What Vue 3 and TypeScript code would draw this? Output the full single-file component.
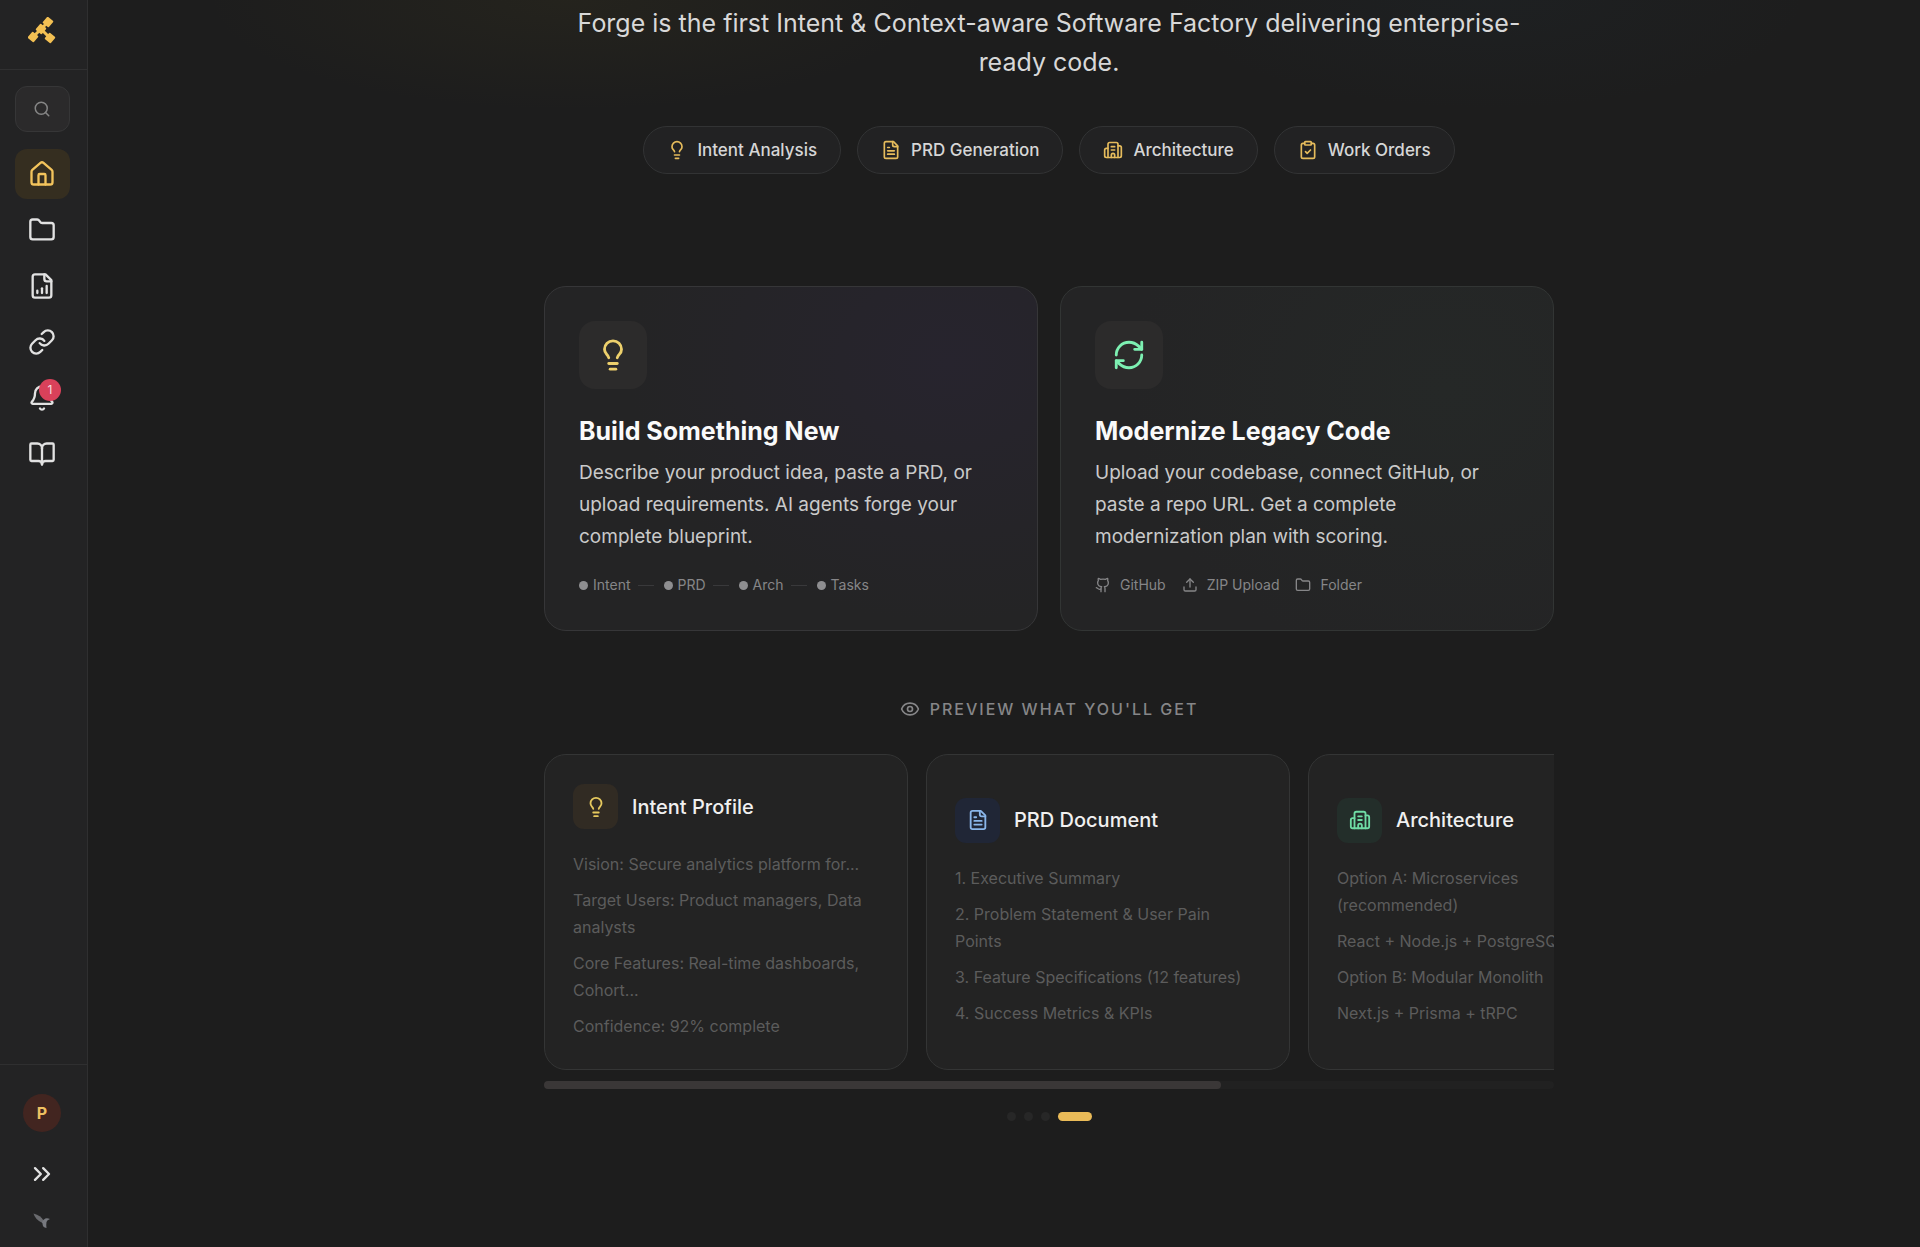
<script setup lang="ts">
interface Tile { icon: string; label: string }
interface Preview { icon: string; tone: string; title: string; lines: string[] }

const icons: Record<string, string[]> = {
  search: ['M21 21l-4.3-4.3', 'M11 3a8 8 0 1 0 0 16a8 8 0 1 0 0-16z'],
  home: [
    'M15 21v-8a1 1 0 0 0-1-1h-4a1 1 0 0 0-1 1v8',
    'M3 10a2 2 0 0 1 .709-1.528l7-6a2 2 0 0 1 2.582 0l7 6A2 2 0 0 1 21 10v9a2 2 0 0 1-2 2H5a2 2 0 0 1-2-2z',
  ],
  folder: ['M20 20a2 2 0 0 0 2-2V8a2 2 0 0 0-2-2h-7.9a2 2 0 0 1-1.69-.9L9.6 3.9A2 2 0 0 0 7.93 3H4a2 2 0 0 0-2 2v13a2 2 0 0 0 2 2Z'],
  chart: ['M15 2H6a2 2 0 0 0-2 2v16a2 2 0 0 0 2 2h12a2 2 0 0 0 2-2V7Z', 'M14 2v4a2 2 0 0 0 2 2h4', 'M8 18v-2', 'M12 18v-4', 'M16 18v-6'],
  link: [
    'M10 13a5 5 0 0 0 7.54.54l3-3a5 5 0 0 0-7.07-7.07l-1.72 1.71',
    'M14 11a5 5 0 0 0-7.54-.54l-3 3a5 5 0 0 0 7.07 7.07l1.71-1.71',
  ],
  bell: [
    'M10.268 21a2 2 0 0 0 3.464 0',
    'M3.262 15.326A1 1 0 0 0 4 17h16a1 1 0 0 0 .74-1.673C19.41 13.956 18 12.499 18 8A6 6 0 0 0 6 8c0 4.499-1.411 5.956-2.738 7.326',
  ],
  book: [
    'M12 7v14',
    'M3 18a1 1 0 0 1-1-1V4a1 1 0 0 1 1-1h5a4 4 0 0 1 4 4 4 4 0 0 1 4-4h5a1 1 0 0 1 1 1v13a1 1 0 0 1-1 1h-6a3 3 0 0 0-3 3 3 3 0 0 0-3-3z',
  ],
  expand: ['M6 17l5-5-5-5', 'M13 17l5-5-5-5'],
  bulb: [
    'M15 14c.2-1 .7-1.7 1.5-2.5 1-.9 1.5-2.2 1.5-3.5A6 6 0 0 0 6 8c0 1 .2 2.2 1.5 3.5.7.7 1.3 1.5 1.5 2.5',
    'M9 18h6',
    'M10 22h4',
  ],
  doc: ['M15 2H6a2 2 0 0 0-2 2v16a2 2 0 0 0 2 2h12a2 2 0 0 0 2-2V7Z', 'M14 2v4a2 2 0 0 0 2 2h4', 'M10 9H8', 'M16 13H8', 'M16 17H8'],
  building: [
    'M10 12h4', 'M10 8h4', 'M14 21v-3a2 2 0 0 0-4 0v3',
    'M6 10H4a2 2 0 0 0-2 2v7a2 2 0 0 0 2 2h16a2 2 0 0 0 2-2V9a2 2 0 0 0-2-2h-2',
    'M6 21V5a2 2 0 0 1 2-2h8a2 2 0 0 1 2 2v16',
  ],
  clipboard: [
    'M9 2h6a1 1 0 0 1 1 1v2a1 1 0 0 1-1 1H9a1 1 0 0 1-1-1V3a1 1 0 0 1 1-1z',
    'M16 4h2a2 2 0 0 1 2 2v14a2 2 0 0 1-2 2H6a2 2 0 0 1-2-2V6a2 2 0 0 1 2-2h2',
    'M9 14l2 2 4-4',
  ],
  refresh: [
    'M3 12a9 9 0 0 1 9-9 9.75 9.75 0 0 1 6.74 2.74L21 8', 'M21 3v5h-5',
    'M21 12a9 9 0 0 1-9 9 9.75 9.75 0 0 1-6.74-2.74L3 16', 'M8 16H3v5',
  ],
  github: [
    'M15 22v-4a4.8 4.8 0 0 0-1-3.5c3 0 6-2 6-5.5.08-1.25-.27-2.48-1-3.5.28-1.15.28-2.35 0-3.5 0 0-1 0-3 1.5-2.64-.5-5.36-.5-8 0C6 2 5 2 5 2c-.3 1.15-.3 2.35 0 3.5A5.403 5.403 0 0 0 4 9c0 3.5 3 5.5 6 5.5-.39.49-.68 1.05-.85 1.65-.17.6-.22 1.23-.15 1.85v4',
    'M9 18c-4.51 2-5-2-7-2',
  ],
  upload: ['M12 3v12', 'M17 8l-5-5-5 5', 'M21 15v4a2 2 0 0 1-2 2H5a2 2 0 0 1-2-2v-4'],
  eye: [
    'M2.062 12.348a1 1 0 0 1 0-.696 10.75 10.75 0 0 1 19.876 0 1 1 0 0 1 0 .696 10.75 10.75 0 0 1-19.876 0',
    'M12 9a3 3 0 1 0 0 6a3 3 0 1 0 0-6z',
  ],
}

const nav: Tile[] = [
  { icon: 'home', label: 'Home' },
  { icon: 'folder', label: 'Projects' },
  { icon: 'chart', label: 'Reports' },
  { icon: 'link', label: 'Integrations' },
  { icon: 'bell', label: 'Notifications' },
  { icon: 'book', label: 'Docs' },
]

const pills: Tile[] = [
  { icon: 'bulb', label: 'Intent Analysis' },
  { icon: 'doc', label: 'PRD Generation' },
  { icon: 'building', label: 'Architecture' },
  { icon: 'clipboard', label: 'Work Orders' },
]

const steps: string[] = ['Intent', 'PRD', 'Arch', 'Tasks']

const sources: Tile[] = [
  { icon: 'github', label: 'GitHub' },
  { icon: 'upload', label: 'ZIP Upload' },
  { icon: 'folder', label: 'Folder' },
]

const previews: Preview[] = [
  {
    icon: 'bulb', tone: 'amber', title: 'Intent Profile',
    lines: [
      'Vision: Secure analytics platform for...',
      'Target Users: Product managers, Data analysts',
      'Core Features: Real-time dashboards, Cohort...',
      'Confidence: 92% complete',
    ],
  },
  {
    icon: 'doc', tone: 'blue', title: 'PRD Document',
    lines: [
      '1. Executive Summary',
      '2. Problem Statement & User Pain Points',
      '3. Feature Specifications (12 features)',
      '4. Success Metrics & KPIs',
    ],
  },
  {
    icon: 'building', tone: 'green', title: 'Architecture',
    lines: [
      'Option A: Microservices (recommended)',
      'React + Node.js + PostgreSQL',
      'Option B: Modular Monolith',
      'Next.js + Prisma + tRPC',
    ],
  },
]
</script>

<template>
  <div class="shell">
    <aside class="sidebar">
      <a href="#" class="logo" aria-label="Forge">
        <svg width="28" height="28" viewBox="0 0 28 28" fill="#f3c053">
          <rect x="16" y="1" width="8" height="8" rx="1" transform="rotate(40 20 5)" />
          <rect x="9" y="8" width="8" height="8" rx="1" transform="rotate(40 13 12)" />
          <rect x="1" y="16" width="8" height="8" rx="1" transform="rotate(40 5 20)" />
          <rect x="18" y="17" width="8" height="8" rx="1" transform="rotate(40 22 21)" />
          <path d="M5 20L20 5M13 12L22 21" stroke="#f3c053" stroke-width="3" />
        </svg>
      </a>
      <nav class="nav">
        <button type="button" class="search" aria-label="Search">
          <svg class="icon s18" viewBox="0 0 24 24"><path v-for="d in icons.search" :key="d" :d="d" /></svg>
        </button>
        <a v-for="(n, i) in nav" :key="n.icon" href="#" class="nav-item" :class="{ active: i === 0 }" :aria-label="n.label">
          <svg class="icon s28" viewBox="0 0 24 24"><path v-for="d in icons[n.icon]" :key="d" :d="d" /></svg>
          <span v-if="n.icon === 'bell'" class="badge">1</span>
        </a>
      </nav>
      <div class="foot">
        <button type="button" class="avatar">P</button>
        <button type="button" class="plain" aria-label="Expand sidebar">
          <svg class="icon s28" viewBox="0 0 24 24"><path v-for="d in icons.expand" :key="d" :d="d" /></svg>
        </button>
        <svg class="bird" width="18" height="18" viewBox="0 0 18 18">
          <path d="M7 7.500Q9.500 9 11 7.500Q13 5.500 17 7Q14 8 13.500 10Q13 13 13.500 16Q9.500 15.500 9.500 11.500Z" fill="#77797f" />
          <path d="M0.500 1.500Q8 3.500 10.500 8.500L8.500 10.500Q2 7 0.500 1.500Z" fill="#696a6e" />
        </svg>
      </div>
    </aside>

    <main class="main">
      <div class="content">
        <p class="lead">Forge is the first Intent &amp; Context-aware Software Factory delivering enterprise-ready code.</p>

        <ul class="pills">
          <li v-for="p in pills" :key="p.label" class="pill">
            <svg class="icon s20" viewBox="0 0 24 24"><path v-for="d in icons[p.icon]" :key="d" :d="d" /></svg>
            {{ p.label }}
          </li>
        </ul>

        <div class="choices">
          <a href="#" class="choice violet">
            <span class="tile"><svg class="icon s34" viewBox="0 0 24 24"><path v-for="d in icons.bulb" :key="d" :d="d" /></svg></span>
            <h2>Build Something New</h2>
            <p>Describe your product idea, paste a PRD, or upload requirements. AI agents forge your complete blueprint.</p>
            <div class="steps">
              <template v-for="(s, i) in steps" :key="s">
                <span v-if="i > 0" class="dash"></span>
                <span class="step"><i class="dot"></i>{{ s }}</span>
              </template>
            </div>
          </a>
          <a href="#" class="choice mint">
            <span class="tile"><svg class="icon s34" viewBox="0 0 24 24"><path v-for="d in icons.refresh" :key="d" :d="d" /></svg></span>
            <h2>Modernize Legacy Code</h2>
            <p>Upload your codebase, connect GitHub, or paste a repo URL. Get a complete modernization plan with scoring.</p>
            <div class="sources">
              <span v-for="s in sources" :key="s.label" class="source">
                <svg class="icon s16" viewBox="0 0 24 24"><path v-for="d in icons[s.icon]" :key="d" :d="d" /></svg>
                {{ s.label }}
              </span>
            </div>
          </a>
        </div>

        <h3 class="heading">
          <svg class="icon s20" viewBox="0 0 24 24"><path v-for="d in icons.eye" :key="d" :d="d" /></svg>
          Preview what you'll get
        </h3>

        <div class="track">
          <article v-for="p in previews" :key="p.title" class="preview">
            <header>
              <span class="chip" :class="p.tone"><svg class="icon s22" viewBox="0 0 24 24"><path v-for="d in icons[p.icon]" :key="d" :d="d" /></svg></span>
              <h4>{{ p.title }}</h4>
            </header>
            <ul>
              <li v-for="l in p.lines" :key="l">{{ l }}</li>
            </ul>
          </article>
        </div>
        <div class="scrollbar"><div class="thumb"></div></div>
        <div class="pager">
          <button v-for="n in 4" :key="n" type="button" :class="{ on: n === 4 }" :aria-label="`Slide ${n}`"></button>
        </div>
      </div>
    </main>
  </div>
</template>

<style>
html, body { margin: 0; background: #1d1d1d; }
</style>

<style scoped>
.shell {
  display: flex;
  min-height: 100vh;
  font-family: Inter, "Open Sans", sans-serif;
  color: #e2e2e2;
}
.shell *, .shell *::before { box-sizing: border-box; }
h2, h3, h4, p, ul { margin: 0; padding: 0; }
ul { list-style: none; }
a { color: inherit; text-decoration: none; }
button { font: inherit; color: inherit; border: 0; padding: 0; background: none; cursor: pointer; }

.icon { fill: none; stroke: currentColor; stroke-width: 2; stroke-linecap: round; stroke-linejoin: round; flex: none; display: block; }
.s16 { width: 16px; height: 16px; }
.s18 { width: 18px; height: 18px; }
.s20 { width: 20px; height: 20px; }
.s22 { width: 22px; height: 22px; }
.s28 { width: 28px; height: 28px; }
.s34 { width: 34px; height: 34px; }

.sidebar {
  flex: none;
  width: 88px;
  display: flex;
  flex-direction: column;
  background: #232324;
  border-right: 1px solid #2f2f30;
}
.logo {
  height: 70px;
  padding: 0 3px 8px 0;
  display: flex;
  align-items: center;
  justify-content: center;
  border-bottom: 1px solid #303031;
}
.nav {
  padding: 16px 17px 0 15px;
  display: flex;
  flex-direction: column;
  gap: 6px;
}
.search, .nav-item {
  display: flex;
  align-items: center;
  justify-content: center;
  padding-right: 2px;
  border-radius: 12px;
}
.search {
  height: 46px;
  margin-bottom: 11px;
  background: #2b2a2b;
  border: 1px solid #363637;
  color: #858585;
}
.nav-item { position: relative; height: 50px; }
.nav-item.active { background: #352e20; color: #f3c45c; }
.badge {
  position: absolute;
  top: 6px;
  right: 9px;
  width: 22px;
  height: 22px;
  border-radius: 50%;
  background: #d9415a;
  color: #f6dfe2;
  font-size: 12px;
  line-height: 22px;
  text-align: center;
}
.foot {
  margin-top: auto;
  padding: 29px 3px 17px 0;
  display: flex;
  flex-direction: column;
  align-items: center;
  border-top: 1px solid #2f2f30;
}
.avatar {
  width: 38px;
  height: 38px;
  border-radius: 50%;
  background: #422520;
  color: #edc062;
  font-size: 16px;
  font-weight: 700;
}
.plain { margin: 28px 0 24px; }

.main {
  flex: 1;
  min-width: 0;
  padding: 4px 0 0 90px;
  background:
    radial-gradient(ellipse 360px 110px at 480px 0, rgba(90, 80, 30, 0.12), transparent),
    radial-gradient(ellipse 320px 110px at 1400px 0, rgba(40, 70, 90, 0.08), transparent),
    #1d1d1d;
}
.content { max-width: 1010px; margin: 0 auto; }
.lead {
  padding: 0 20px;
  font-size: 25px;
  line-height: 39px;
  text-align: center;
  color: #d8d8d8;
}
.pills {
  margin-top: 44px;
  display: flex;
  justify-content: center;
  gap: 16px;
}
.pill {
  height: 48px;
  padding: 0 23px;
  display: flex;
  align-items: center;
  gap: 10px;
  border: 1px solid #323334;
  border-radius: 24px;
  background: #222223;
  font-size: 17px;
  font-weight: 500;
  color: #d6d6d6;
  white-space: nowrap;
}
.pill .icon { color: #e6bc5c; }

.choices {
  margin-top: 112px;
  display: grid;
  grid-template-columns: 1fr 1fr;
  gap: 22px;
}
.choice {
  padding: 34px;
  border: 1px solid #363638;
  border-radius: 22px;
}
.violet { background: radial-gradient(ellipse 320px 260px at 82% 22%, #27242e, #242425); }
.mint { background: radial-gradient(ellipse 320px 280px at 78% 30%, #252827, #242425); border-color: #323534; }
.tile {
  width: 68px;
  height: 68px;
  display: flex;
  align-items: center;
  justify-content: center;
  border-radius: 16px;
  background: #2c2b2b;
}
.violet .tile { color: #edd06c; }
.mint .tile { color: #7df0b2; }
.choice h2 {
  margin-top: 24px;
  font-size: 25px;
  line-height: 36px;
  font-weight: 700;
  color: #fafafa;
}
.choice p {
  margin-top: 8px;
  font-size: 19px;
  line-height: 32px;
  color: #cacaca;
}
.steps, .sources {
  margin-top: 21px;
  height: 22px;
  display: flex;
  align-items: center;
  font-size: 14px;
  line-height: 22px;
  color: #868688;
}
.step, .source { display: flex; align-items: center; }
.step { gap: 5px; }
.dot { width: 9px; height: 9px; border-radius: 50%; background: #8e8e90; }
.dash { width: 16px; height: 1px; margin: 0 10px 0 7px; background: #39393b; }
.sources { gap: 16px; }
.source { gap: 9px; }

.heading {
  margin-top: 67px;
  display: flex;
  align-items: center;
  justify-content: center;
  gap: 10px;
  font-size: 16px;
  line-height: 22px;
  font-weight: 500;
  letter-spacing: 2px;
  text-transform: uppercase;
  color: #868688;
}

.track {
  margin-top: 34px;
  display: flex;
  gap: 18px;
  overflow: hidden;
}
.preview {
  flex: 0 0 364px;
  min-height: 316px;
  padding: 28px;
  display: flex;
  flex-direction: column;
  justify-content: center;
  border: 1px solid #343535;
  border-radius: 22px;
  background: #232323;
}
.preview header { display: flex; align-items: center; gap: 14px; }
.chip {
  width: 45px;
  height: 45px;
  display: flex;
  align-items: center;
  justify-content: center;
  border-radius: 11px;
}
.amber { background: #312b23; color: #e6c95e; }
.blue { background: #202636; color: #8ab6ea; }
.green { background: #232e2a; color: #6fdca4; }
.preview h4 { font-size: 20px; line-height: 28px; font-weight: 500; color: #f0f0f0; }
.preview ul {
  margin-top: 22px;
  display: flex;
  flex-direction: column;
  gap: 9px;
  font-size: 16px;
  line-height: 27px;
  color: #5c5c5c;
}

.scrollbar { margin-top: 11px; height: 8px; border-radius: 4px; background: #212121; }
.thumb { width: 67%; height: 8px; border-radius: 4px; background: #3a3737; }
.pager {
  margin-top: 23px;
  display: flex;
  justify-content: center;
  gap: 8px;
}
.pager button { width: 9px; height: 9px; border-radius: 5px; background: #272727; }
.pager button.on { width: 34px; background: #eabb58; }
</style>
